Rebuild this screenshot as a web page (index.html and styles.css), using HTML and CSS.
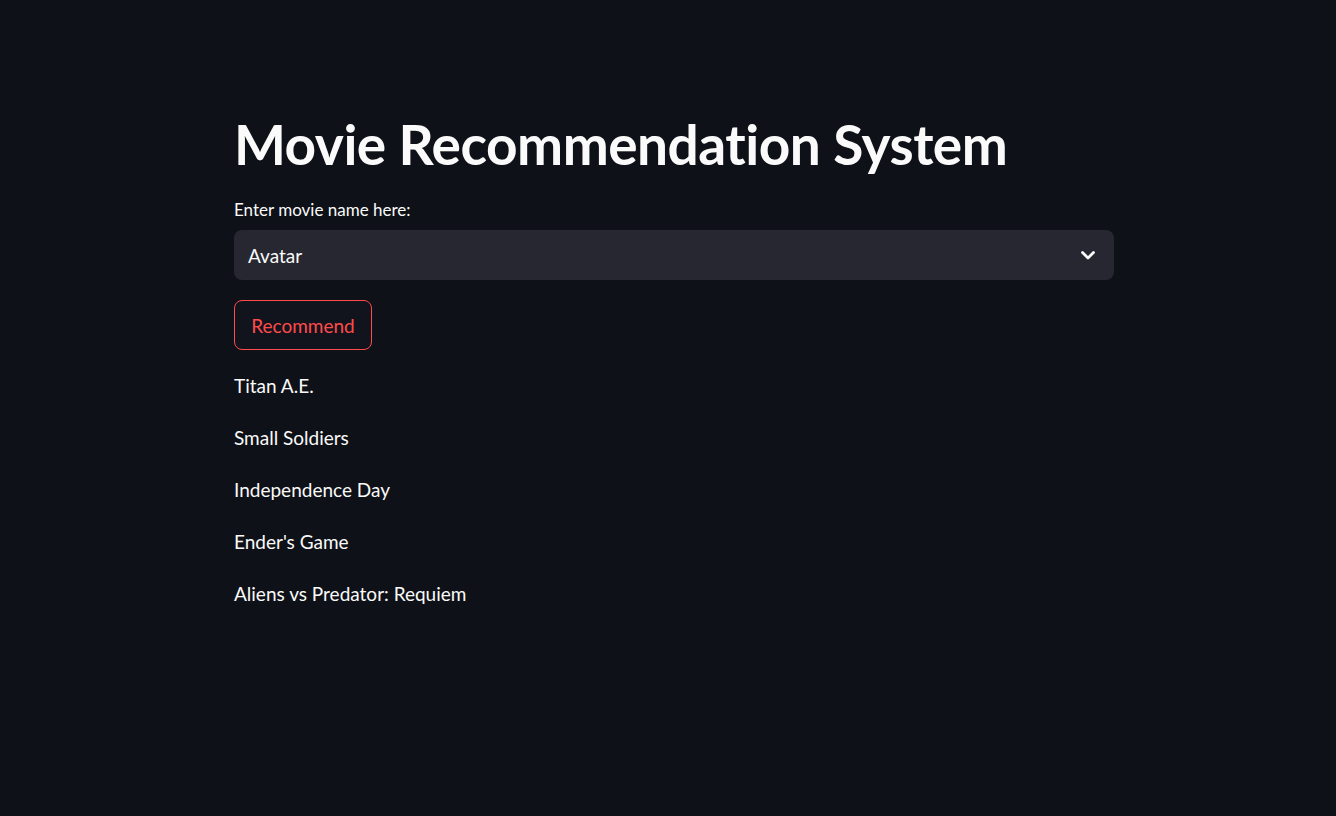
FILE: index.html
```html
<!DOCTYPE html>
<html lang="en">
<head>
<meta charset="utf-8">
<title>Movie Recommendation System</title>
<link rel="stylesheet" href="styles.css">
</head>
<body>
<main class="main">
  <div class="block">
    <h1 class="title">Movie Recommendation System</h1>
    <div class="field">
      <label class="label">Enter movie name here:</label>
      <div class="select">
        <span class="select-value">Avatar</span>
        <svg class="chevron" width="16" height="11" viewBox="0 0 16 11" aria-hidden="true">
          <path d="M2.5 2.5l5.5 5.5 5.5-5.5" fill="none" stroke="#fafafa" stroke-width="2.8" stroke-linecap="round" stroke-linejoin="round"/>
        </svg>
      </div>
    </div>
    <button class="btn" type="button">Recommend</button>
    <div class="results">
      <p class="item">Titan A.E.</p>
      <p class="item">Small Soldiers</p>
      <p class="item">Independence Day</p>
      <p class="item">Ender's Game</p>
      <p class="item">Aliens vs Predator: Requiem</p>
    </div>
  </div>
</main>
</body>
</html>
```
FILE: styles.css
```css
html, body {
  margin: 0;
  padding: 0;
  background: #0e1117;
  color: #fafafa;
  font-family: Lato, "Noto Sans", sans-serif;
}
.main {
  padding: 108px 0 0 234px;
}
.block {
  width: 880px;
  display: flex;
  flex-direction: column;
}
.title {
  margin: 0;
  font-size: 55px;
  font-weight: 700;
  line-height: 72px;
  letter-spacing: -0.5px;
}
.field {
  margin-top: 18px;
  display: flex;
  flex-direction: column;
}
.label {
  font-size: 17px;
  line-height: 24px;
  height: 32px;
}
.select {
  height: 50px;
  background: #262730;
  border-radius: 8px;
  display: flex;
  align-items: center;
  justify-content: space-between;
  padding: 0 18px 0 14px;
  font-size: 19px;
}
.chevron {
  display: block;
  margin-top: 1px;
}
.btn {
  margin-top: 20px;
  align-self: flex-start;
  width: 138px;
  height: 50px;
  border: 1px solid #ff4b4b;
  border-radius: 8px;
  background: #11141c;
  color: #ff4b4b;
  font-family: inherit;
  font-size: 19px;
  padding: 0;
}
.results {
  margin-top: 22px;
}
.item {
  margin: 0 0 24px 0;
  font-size: 19px;
  line-height: 28px;
}
```
